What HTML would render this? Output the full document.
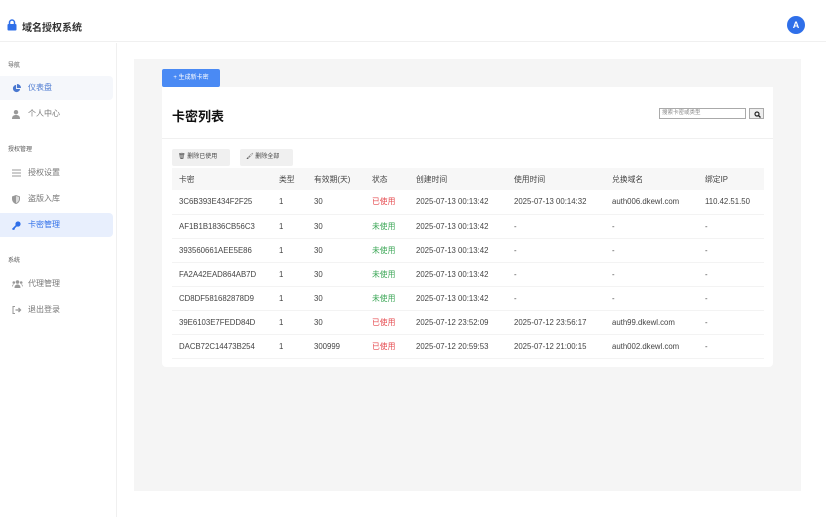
<!DOCTYPE html><html><head><meta charset="utf-8"><style>
*{box-sizing:border-box;margin:0;padding:0}
body{width:826px;height:517px;background:#fff;font-family:"Liberation Sans","Noto Sans CJK SC",sans-serif;position:relative;overflow:hidden;color:#333}
.hdr{position:absolute;left:0;top:0;width:826px;height:42px;border-bottom:1px solid #f0f0f0;background:#fff}
.logo{position:absolute;left:22px;top:19px;font-size:10px;font-weight:bold;color:#333}
.lock{position:absolute;left:7px;top:19px}
.av{position:absolute;left:787px;top:16px;width:18px;height:18px;border-radius:50%;background:#2f6fe9;color:#fff;font-size:9px;font-weight:bold;text-align:center;line-height:18px}
.side{position:absolute;left:0;top:43px;width:117px;height:474px;border-right:1px solid #f0f0f0;background:#fff}
.sec{position:absolute;left:8px;font-size:6px;color:#555}
.it{position:absolute;left:0;width:113px;height:24px;font-size:8px;color:#777;line-height:24px;padding-left:28px;border-radius:0 4px 4px 0}
.it svg{position:absolute;left:12px;top:8px}
.main{position:absolute;left:134px;top:59px;width:667px;height:432px;background:#f5f5f5}
.btn{position:absolute;left:162px;top:69px;width:58px;height:18px;background:#4a8af4;border-radius:2px;color:#fff;font-size:6px;line-height:18px;text-align:center}
.card{position:absolute;left:162px;top:87px;width:611px;height:280px;background:#fff;border-radius:0 0 4px 4px}
.title{position:absolute;left:10px;top:19px;font-size:13px;font-weight:bold;color:#111}
.line{position:absolute;left:0;top:51px;width:611px;border-top:1px solid #f0f0f0}
.srch{position:absolute;left:497px;top:21px;width:87px;height:11px;border:1px solid #aaa;font-size:5.5px;color:#888;padding-left:2px;line-height:9px}
.sb{position:absolute;left:587px;top:21px;width:15px;height:11px;border:1px solid #aaa;background:#eee}
.sb svg{position:absolute;left:4px;top:2px}
.sbtn{position:absolute;top:62px;height:17px;background:#f0f0f0;border-radius:2px;font-size:6px;line-height:17px;padding-left:6px;color:#444}
table{position:absolute;left:10px;top:81px;width:592px;border-collapse:collapse;font-size:7.8px;color:#444}
td{height:24px;border-bottom:1px solid #f3f3f3;white-space:nowrap;padding:0}
tr.h td{height:22px;background:#f7f7f7;border:none}
.r{color:#e5484d}.g{color:#3aa655}
</style></head><body>
<div class="hdr"><svg class="lock" width="10" height="12" viewBox="0 0 10 12"><path d="M2.5 5V3.5a2.5 2.5 0 0 1 5 0V5" fill="none" stroke="#2f6fe9" stroke-width="1.5"/><rect x="0.5" y="5" width="9" height="6.5" rx="1" fill="#2f6fe9"/></svg><div class="logo">域名授权系统</div><div class="av">A</div></div>
<div class="side">
<div class="sec" style="top:17px">导航</div>
<div class="it" style="top:33px;background:#f5f7fb;color:#4a78d0"><svg width="9" height="9" viewBox="0 0 10 10"><path d="M4.5 1a4 4 0 1 0 4.5 4.5H4.5z" fill="#4a78d0"/><path d="M5.5 0v4.5H10A4.5 4.5 0 0 0 5.5 0z" fill="#4a78d0"/></svg>仪表盘</div>
<div class="it" style="top:59px"><svg width="8" height="9" viewBox="0 0 8 9"><circle cx="4" cy="2.2" r="2.2" fill="#999"/><path d="M0 9c0-3 1.5-4 4-4s4 1 4 4z" fill="#999"/></svg>个人中心</div>
<div class="sec" style="top:101px">授权管理</div>
<div class="it" style="top:118px"><svg width="9" height="8" viewBox="0 0 9 8"><path d="M0 1h9M0 4h9M0 7h9" stroke="#999" stroke-width="1"/></svg>授权设置</div>
<div class="it" style="top:144px"><svg width="8" height="9" viewBox="0 0 8 9"><path d="M4 0L0 1.5V4c0 2.5 2 4.5 4 5 2-.5 4-2.5 4-5V1.5z" fill="#999"/><path d="M4 1v7c1.5-.5 3-2 3-4V2z" fill="#ddd"/></svg>盗版入库</div>
<div class="it" style="top:170px;background:#e8effd;color:#2f6fe9"><svg width="9" height="9" viewBox="0 0 9 9"><circle cx="6" cy="3" r="2.6" fill="#2f6fe9"/><path d="M4.5 4.5L0.5 8.5M1.5 7.5l1 1" stroke="#2f6fe9" stroke-width="1.6"/></svg>卡密管理</div>
<div class="sec" style="top:212px">系统</div>
<div class="it" style="top:229px"><svg width="11" height="8" viewBox="0 0 11 8"><circle cx="5.5" cy="2" r="1.8" fill="#999"/><circle cx="1.8" cy="2.5" r="1.3" fill="#999"/><circle cx="9.2" cy="2.5" r="1.3" fill="#999"/><path d="M2.5 8c0-2.5 1.2-3.5 3-3.5s3 1 3 3.5zM0 7c0-2 .8-2.8 2-2.8M11 7c0-2-.8-2.8-2-2.8" fill="#999"/></svg>代理管理</div>
<div class="it" style="top:255px"><svg width="10" height="8" viewBox="0 0 10 8"><path d="M3 .5H1v7h2" fill="none" stroke="#999"/><path d="M3.5 4H8M6.5 2l2 2-2 2" fill="none" stroke="#999" stroke-width="1.3"/></svg>退出登录</div>
</div>
<div class="main"></div>
<div class="btn">+ 生成新卡密</div>
<div class="card">
<div class="title">卡密列表</div>
<div class="srch">搜索卡密或类型</div><div class="sb"><svg width="7" height="7" viewBox="0 0 7 7"><circle cx="3" cy="3" r="2" fill="none" stroke="#222" stroke-width="1.2"/><path d="M4.5 4.5L6.5 6.5" stroke="#222" stroke-width="1.3"/></svg></div>
<div class="line"></div>
<div class="sbtn" style="left:10px;width:58px">🗑︎ 删除已使用</div>
<div class="sbtn" style="left:78px;width:53px">🖌︎ 删除全部</div>
<table>
<colgroup><col style="width:107px"><col style="width:35px"><col style="width:58px"><col style="width:44px"><col style="width:98px"><col style="width:98px"><col style="width:93px"><col></colgroup>
<tr class="h"><td style="padding-left:7px">卡密</td><td>类型</td><td>有效期(天)</td><td>状态</td><td>创建时间</td><td>使用时间</td><td>兑换域名</td><td>绑定IP</td></tr>
<tr><td style="padding-left:7px">3C6B393E434F2F25</td><td>1</td><td>30</td><td class="r">已使用</td><td>2025-07-13 00:13:42</td><td>2025-07-13 00:14:32</td><td>auth006.dkewl.com</td><td>110.42.51.50</td></tr>
<tr><td style="padding-left:7px">AF1B1B1836CB56C3</td><td>1</td><td>30</td><td class="g">未使用</td><td>2025-07-13 00:13:42</td><td>-</td><td>-</td><td>-</td></tr>
<tr><td style="padding-left:7px">393560661AEE5E86</td><td>1</td><td>30</td><td class="g">未使用</td><td>2025-07-13 00:13:42</td><td>-</td><td>-</td><td>-</td></tr>
<tr><td style="padding-left:7px">FA2A42EAD864AB7D</td><td>1</td><td>30</td><td class="g">未使用</td><td>2025-07-13 00:13:42</td><td>-</td><td>-</td><td>-</td></tr>
<tr><td style="padding-left:7px">CD8DF581682878D9</td><td>1</td><td>30</td><td class="g">未使用</td><td>2025-07-13 00:13:42</td><td>-</td><td>-</td><td>-</td></tr>
<tr><td style="padding-left:7px">39E6103E7FEDD84D</td><td>1</td><td>30</td><td class="r">已使用</td><td>2025-07-12 23:52:09</td><td>2025-07-12 23:56:17</td><td>auth99.dkewl.com</td><td>-</td></tr>
<tr><td style="padding-left:7px">DACB72C14473B254</td><td>1</td><td>300999</td><td class="r">已使用</td><td>2025-07-12 20:59:53</td><td>2025-07-12 21:00:15</td><td>auth002.dkewl.com</td><td>-</td></tr>
</table>
</div>
</body></html>
